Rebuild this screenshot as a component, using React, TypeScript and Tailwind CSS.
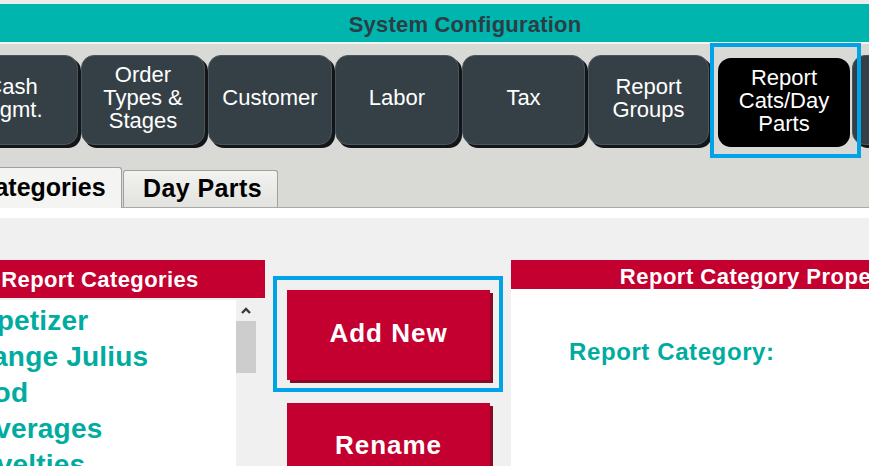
import React from "react";

const navBtn =
  "shrink-0 h-[90px] pb-[5px] rounded-[13px] bg-[#353f46] text-white text-[22px] leading-[23px] flex items-center justify-center text-center shadow-[3px_3px_0_#121619] border border-[#4a555c]";

export default function App() {
  return (
    <div className="relative w-[869px] h-[466px] overflow-hidden bg-[#d9d9d5] font-['Liberation_Sans',Arial,sans-serif]">
      <div className="h-[4px] bg-[#ececec]" />
      <div className="h-[38px] bg-[#00b5ad] flex items-center justify-center pl-[61px] pt-[3px]">
        <span className="text-[22px] font-bold text-[#2c3d44] tracking-[0.2px]">System Configuration</span>
      </div>
      <div className="h-[2px] bg-[#f4f4f4]" />

      {/* nav buttons */}
      <div className="flex items-start h-[114px] pt-[11px] ml-[-46px]">
        <div className={`${navBtn} w-[124px] pr-[8px]`}>Cash<br />Mgmt.</div>
        <div className={`${navBtn} w-[124px] ml-[3px]`}>Order<br />Types &amp;<br />Stages</div>
        <div className={`${navBtn} w-[124px] ml-[3px]`}>Customer</div>
        <div className={`${navBtn} w-[124px] ml-[3px]`}>Labor</div>
        <div className={`${navBtn} w-[123px] ml-[3px]`}>Tax</div>
        <div className={`${navBtn} w-[121px] ml-[3px]`}>Report<br />Groups</div>
        <div className="shrink-0 w-[132px] h-[89px] pb-[4px] mt-[3px] ml-[9px] rounded-[13px] bg-black text-white text-[22px] leading-[23px] flex items-center justify-center text-center">
          Report<br />Cats/Day<br />Parts
        </div>
        <div className={`${navBtn} w-[124px] ml-[2px]`}>Menu</div>
      </div>

      {/* highlight frame over selected nav */}
      <div className="absolute left-[710px] top-[43px] w-[151px] h-[115px] border-[4px] border-[#00a2e8]" />

      {/* tabs */}
      <div className="relative h-[50px] flex items-end border-b border-[#a9a9a9]">
        <div className="w-[162px] ml-[-40px] h-[41px] mb-[-1px] bg-[#f4f4f2] border border-b-0 border-[#a0a0a0] rounded-t-[3px] flex items-center justify-center text-[25px] font-bold text-black">
          Categories
        </div>
        <div className="w-[155px] ml-[1px] h-[37px] bg-gradient-to-b from-[#f2f2f0] to-[#e2e2de] border border-b-0 border-[#a0a0a0] rounded-t-[3px] flex items-center justify-center pl-[4px] text-[25px] font-bold text-black tracking-[0.4px]">
          Day Parts
        </div>
      </div>
      <div className="h-[10px] bg-white" />

      {/* lower panel */}
      <div className="flex h-[248px] bg-[#f0f0f0] pt-[42px]">
        {/* left list panel */}
        <div className="shrink-0 w-[330px] ml-[-65px] flex flex-col">
          <div className="h-[38px] bg-[#c3002f] flex items-center justify-center text-white text-[22px] font-bold tracking-[0.4px]">
            Report Categories
          </div>
          <div className="mt-[2px] mr-[9px] flex flex-1 min-h-0">
            <div className="flex-1 bg-white pl-[24px] pt-[3px] overflow-hidden">
              {["Appetizer", "Orange Julius", "Food", "Beverages", "Novelties"].map((t) => (
                <div key={t} className="text-[28px] leading-[36px] font-bold text-[#00ab9f] whitespace-nowrap tracking-[0.2px]">
                  {t}
                </div>
              ))}
            </div>
            <div className="w-[20px] bg-[#f0f0f0] flex flex-col">
              <div className="h-[20px] flex items-center justify-center">
                <svg width="12" height="9" viewBox="0 0 12 9">
                  <path d="M2 7 L6 3 L10 7" fill="none" stroke="#3a3a3a" strokeWidth="2.4" />
                </svg>
              </div>
              <div className="h-[52px] mt-[1px] bg-[#cdcdcd]" />
            </div>
          </div>
        </div>

        {/* middle buttons */}
        <div className="shrink-0 ml-[8px] w-[230px] pt-[16px]">
          <div className="border-[4px] border-[#00a2e8] pt-[10px] pl-[10px] pr-[9px] pb-[8px]">
            <div className="h-[90px] pb-[4px] bg-[#c3002f] shadow-[3px_3px_0_#8a0a24] flex items-center justify-center text-white text-[26px] font-bold tracking-[1px]">
              Add New
            </div>
          </div>
          <div className="ml-[14px] mr-[13px] mt-[11px] h-[90px] pb-[6px] bg-[#c3002f] shadow-[3px_3px_0_#8a0a24] flex items-center justify-center text-white text-[26px] font-bold tracking-[1px]">
            Rename
          </div>
        </div>

        {/* right properties panel */}
        <div className="shrink-0 ml-[8px] w-[518px] bg-white flex flex-col">
          <div className="h-[29px] overflow-hidden bg-[#c3002f] flex justify-center pt-[5px] text-white text-[22px] leading-[24px] font-bold tracking-[0.5px] whitespace-nowrap">
            Report Category Properties
          </div>
          <div className="pl-[58px] pt-[45px] text-[24px] font-bold text-[#00ab9f] tracking-[0.6px]">
            Report Category:
          </div>
        </div>
      </div>
    </div>
  );
}
